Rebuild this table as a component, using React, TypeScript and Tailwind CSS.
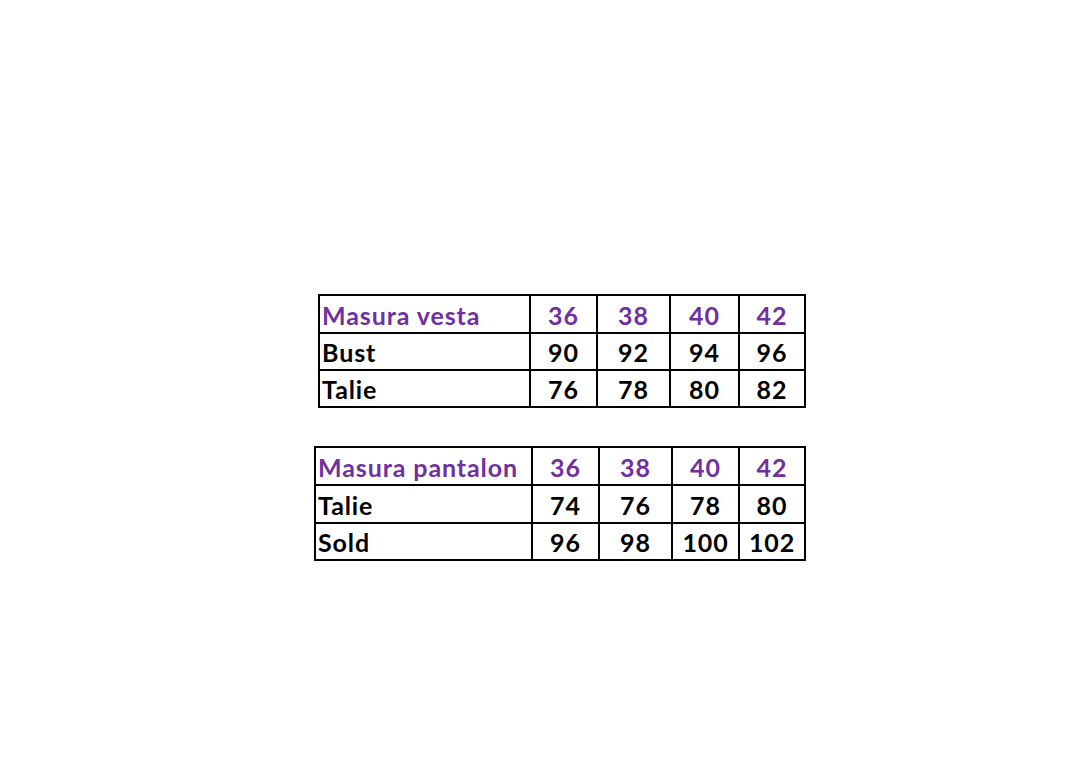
import React from "react";

type Table = { widths: string[]; heights: string[]; rows: string[][] };

const t1: Table = {
  widths: ["w-[211px]", "w-[67px]", "w-[73px]", "w-[69px]", "w-[66px]"],
  heights: ["h-[38px]", "h-[37px]", "h-[37px]"],
  rows: [
    ["Masura vesta", "36", "38", "40", "42"],
    ["Bust", "90", "92", "94", "96"],
    ["Talie", "76", "78", "80", "82"],
  ],
};
const t2: Table = {
  widths: ["w-[217px]", "w-[67px]", "w-[73px]", "w-[67px]", "w-[66px]"],
  heights: ["h-[38px]", "h-[38px]", "h-[37px]"],
  rows: [
    ["Masura pantalon", "36", "38", "40", "42"],
    ["Talie", "74", "76", "78", "80"],
    ["Sold", "96", "98", "100", "102"],
  ],
};

function SizeTable({ t }: { t: Table }) {
  return (
    <table className="border-collapse table-fixed w-max">
      <colgroup>
        {t.widths.map((w, i) => (
          <col key={i} className={w} />
        ))}
      </colgroup>
      <tbody>
        {t.rows.map((r, ri) => (
          <tr key={ri} className={t.heights[ri]}>
            {r.map((c, ci) => (
              <td
                key={ci}
                className={`border-2 border-black p-0 leading-none align-middle text-[25px] font-bold tracking-[0.9px] ${
                  ci === 0 ? "text-left pl-[2px]" : "text-center"
                } ${ri === 0 ? "text-[#7030a0]" : "text-black"}`}
              >
                <span className="relative top-[1px]">{c}</span>
              </td>
            ))}
          </tr>
        ))}
      </tbody>
    </table>
  );
}

export default function App() {
  return (
    <div className="w-[1080px] h-[761px] bg-white font-['Lato',_'Open_Sans',_sans-serif]">
      <div className="pt-[294px] pl-[318px] flex flex-col">
        <SizeTable t={t1} />
        <div className="mt-[38px] -ml-[4px]">
          <SizeTable t={t2} />
        </div>
      </div>
    </div>
  );
}
